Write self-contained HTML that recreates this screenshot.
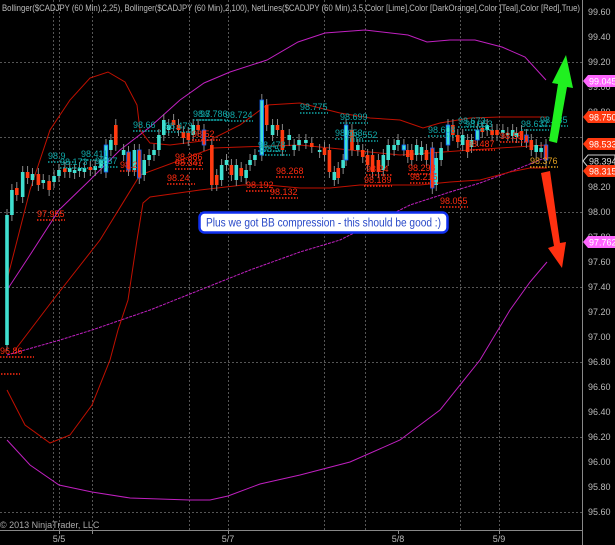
<!DOCTYPE html>
<html><head><meta charset="utf-8"><style>
html,body{margin:0;padding:0;background:#000;width:615px;height:545px;overflow:hidden}
svg{display:block}
text{font-family:"Liberation Sans",sans-serif}
</style></head><body>
<svg id="s" width="615" height="545" viewBox="0 0 615 545" xmlns="http://www.w3.org/2000/svg">
<rect width="615" height="545" fill="#000"/>
<g stroke="#555" stroke-width="1" stroke-dasharray="2,2" fill="none">
<line x1="0" y1="62.5" x2="582" y2="62.5"/><line x1="0" y1="137.5" x2="582" y2="137.5"/>
<line x1="0" y1="212.5" x2="582" y2="212.5"/><line x1="0" y1="287.5" x2="582" y2="287.5"/>
<line x1="0" y1="362.5" x2="582" y2="362.5"/><line x1="0" y1="437.5" x2="582" y2="437.5"/>
<line x1="0" y1="512.5" x2="582" y2="512.5"/>
<line x1="53.5" y1="0" x2="53.5" y2="530"/><line x1="59.5" y1="0" x2="59.5" y2="530"/>
<line x1="92.5" y1="0" x2="92.5" y2="530"/><line x1="189.5" y1="0" x2="189.5" y2="530"/>
<line x1="228.5" y1="0" x2="228.5" y2="530"/><line x1="324.5" y1="0" x2="324.5" y2="530"/>
<line x1="365.5" y1="0" x2="365.5" y2="530"/><line x1="460.5" y1="0" x2="460.5" y2="530"/>
<line x1="499.5" y1="0" x2="499.5" y2="530"/>
</g>
<line x1="582.5" y1="0" x2="582.5" y2="545" stroke="#888"/>
<line x1="0" y1="530.5" x2="582" y2="530.5" stroke="#888"/>
<g stroke="#888"><line x1="59.5" y1="530" x2="59.5" y2="534"/><line x1="92.5" y1="530" x2="92.5" y2="534"/><line x1="228.5" y1="530" x2="228.5" y2="534"/><line x1="398.5" y1="530" x2="398.5" y2="534"/><line x1="499.5" y1="530" x2="499.5" y2="534"/></g>

<g fill="none" stroke-width="1">
<polyline stroke="#c020c0" points="180,100 204,83 230,72 267,60 298,42 325,33 365,30 408,35 427,42 450,40 475,40 502,47 525,57 546,80"/>
<polyline stroke="#c020c0" points="7,290 30,255 59,210 90,180 120,150 150,127 180,100"/>
<polyline stroke="#c020c0" stroke-dasharray="3,1" points="7,355 60,340 92,330 150,310 200,290 250,270 300,252 340,240 410,205 450,192 480,183 520,168 547,157"/>
<polyline stroke="#c020c0" points="7,440 30,465 59,485 92,492 130,498 189,500 210,500 228,496 260,484 300,475 350,462 400,440 440,410 480,360 510,310 530,282 547,262"/>
<polyline stroke="#c01000" points="7,280 30,190 50,130 70,100 90,78 108,72 125,82 137,105 140,130 150,143 170,145 210,140 240,125 267,105 300,103 340,113 370,118 400,120 423,128 440,123 470,118 500,117 547,117"/>
<polyline stroke="#c01000" points="15,350 53,300 100,240 140,175 213,148 300,145 350,150 400,155 430,153 470,150 500,148 547,145"/>
<polyline stroke="#c01000" points="7,390 25,425 50,443 70,435 92,405 110,360 118,330 128,300 137,240 143,203 150,197 200,190 243,185 267,185 300,188 330,188 360,185 420,185 450,182 480,180 510,172 530,168 547,168"/>
</g>
<g id="c"></g>
<g font-size="9" id="lab"></g>

<rect x="199.5" y="212.5" width="248" height="20" rx="5" fill="#fff" stroke="#1030f0" stroke-width="2.5"/>
<text x="206" y="226.5" font-size="11.5" fill="#2848c8" textLength="235" lengthAdjust="spacingAndGlyphs">Plus we got BB compression - this should be good :)</text>

<polygon points="549,141 558,84 552,83 566,55 573,88 567,87 557,143" fill="#20f020"/>
<polygon points="541,173 550,171 560,243 566,242 562,268 548,248 554,246" fill="#ff3010"/>

<text x="2" y="11" font-size="9" fill="#bbb" textLength="578" lengthAdjust="spacingAndGlyphs">Bollinger($CADJPY (60 Min),2,25), Bollinger($CADJPY (60 Min),2,100), NetLines($CADJPY (60 Min),3,5,Color [Lime],Color [DarkOrange],Color [Teal],Color [Red],True)</text>
<text x="0" y="528" font-size="9" fill="#aaa">© 2013 NinjaTrader, LLC</text>
<g font-size="9" fill="#bbb" text-anchor="middle"><text x="59" y="542">5/5</text><text x="228" y="542">5/7</text><text x="398" y="542">5/8</text><text x="499" y="542">5/9</text></g>
<g font-size="9" fill="#bbb" id="ax"></g>
<g font-size="9" id="tags"></g>
</svg>
<script>
var NS="http://www.w3.org/2000/svg";
function el(p,t,a,txt){var e=document.createElementNS(NS,t);for(var k in a)e.setAttribute(k,a[k]);if(txt)e.textContent=txt;p.appendChild(e);return e;}
var ax=document.getElementById('ax');
for(var i=0;i<=20;i++){var p=99.6-i*0.2,y=12+i*25;if(i==5)continue;el(ax,'text',{x:588,y:y+3},p.toFixed(2));}
var tg=document.getElementById('tags');
[[81,'99.045','#ff66ff','#fff'],[117,'98.750','#ff3a10','#fff'],[144,'98.533','#ff3a10','#fff'],[161,'98.394','#000','#ddd'],[171,'98.315','#ff3a10','#fff'],[242,'97.762','#ff66ff','#fff']].forEach(function(t){
el(tg,'polygon',{points:'583,'+t[0]+' 588,'+(t[0]-6)+' 615,'+(t[0]-6)+' 615,'+(t[0]+6)+' 588,'+(t[0]+6),fill:t[2],stroke:t[2]=='#000'?'#ccc':'none'});
el(tg,'text',{x:589,y:t[0]+3.5,fill:t[3]},t[1]);});
var C='#40e0d0',R='#ff3a10',B='#1060ff';
var d=[[7,215,345,C],[12,190,215,C],[17,188,195,R],[23,172,197,C],[28,172,178,R],[33,174,180,C],[39,174,185,R],[44,180,183,C],[50,181,190,R],[55,176,182,C],[60,170,176,C],[66,168,172,R],[71,168,172,C],[76,170,173,C],[81,168,171,C],[86,168,172,C],[92,167,170,R],[97,166,170,C],[103,160,168,C],[108,145,172,C,1],[113,140,150,C],[118,125,145,R],[126,150,155,C],[131,152,170,R,1],[137,150,170,C],[142,150,178,R,1],[147,160,175,C],[152,155,160,C],[157,150,155,C],[162,135,150,C],[167,120,135,C],[172,125,130,C],[177,120,125,R],[182,125,130,R],[187,132,138,R],[192,133,140,R],[197,125,135,C],[202,125,130,R],[208,130,145,R,1],[216,145,185,R],[221,175,185,R],[226,165,180,C],[231,160,165,C],[236,165,175,R],[241,165,180,C],[246,168,176,R],[251,170,178,C],[255,160,165,C],[260,155,160,C],[267,100,155,C,1],[272,105,125,R],[278,125,135,C],[283,125,130,R],[288,130,150,R],[295,135,140,C],[300,145,150,C],[305,140,145,C],[312,140,143,C],[318,143,147,R],[326,150,152,C],[331,148,155,R],[336,150,172,R],[341,172,180,C],[345,168,178,R],[350,160,168,C],[353,125,160,C,1],[359,130,150,R],[365,145,150,C],[370,150,157,R],[375,155,165,R],[380,155,172,R],[386,160,172,R],[391,155,170,C],[396,145,160,C],[402,145,150,C],[406,140,145,C],[412,145,150,C,1],[416,150,157,R],[420,150,160,R],[425,145,155,C],[430,147,155,C],[435,150,160,R],[441,148,188,R,1],[445,158,185,C],[450,148,160,C],[457,125,145,C,1],[462,125,135,R],[467,135,142,R],[472,135,145,C],[477,140,152,R],[481,140,147,C],[487,130,140,C,1],[492,128,132,R],[497,125,130,C],[502,130,135,R],[507,130,135,R],[513,130,133,C],[518,133,135,C],[523,130,136,C],[527,133,137,C],[532,131,140,R],[537,135,142,R,1],[542,140,150,R],[547,145,152,C],[552,148,152,C],[557,145,160,R,1]];
var g=document.getElementById('c');
d.forEach(function(c){var x=7+(c[0]-7)*(546-7)/(557-7);
el(g,'line',{x1:x,y1:c[1]-6,x2:x,y2:c[2]+6,stroke:'#888','stroke-width':1});
el(g,'rect',{x:x-1.8,y:c[1],width:3.6,height:Math.max(1.5,c[2]-c[1]),fill:c[3],stroke:c[4]?B:'none','stroke-width':0.8});});
var lb=document.getElementById('lab');
var TL='#10a8a8',RD='#ff2a10',OR='#e0a020';
[[0,354,'96.86',RD,34],[-2,371,'',RD,22],[37,217,'97.955',RD,28],[48,159,'98.9',TL,28],[60,165,'98.173',TL,28],[81,157,'98.411',TL,28],[95,164,'98.37',TL,24],[120,168,'98.2',RD,18],[165,129,'98.473',TL,28],[167,181,'98.24',RD,28],[175,160,'98.386',RD,28],[175,166,'98.341',RD,28],[133,128,'98.66',TL,28],[193,117,'98.7',TL,28],[192,137,'98.52',RD,28],[200,117,'98.786',TL,28],[225,118,'98.724',TL,28],[246,188,'98.192',RD,28],[258,148,'98.478',TL,28],[262,152,'98.5',TL,28],[270,195,'98.132',RD,28],[276,174,'98.268',RD,28],[300,110,'98.775',TL,28],[335,136,'98.653',TL,28],[340,120,'98.699',TL,28],[350,138,'98.552',TL,28],[366,172,'98.24',RD,26],[364,183,'98.189',RD,28],[408,171,'98.298',RD,28],[410,180,'98.215',RD,28],[440,204,'98.055',RD,28],[428,133,'98.608',TL,28],[458,124,'98.673',TL,28],[465,127,'98.653',TL,28],[467,147,'98.487',RD,28],[500,139,'98.55',RD,28],[521,127,'98.637',TL,28],[530,164,'98.376',OR,28],[540,123,'98.685',TL,28]].forEach(function(l){
if(l[2])el(lb,'text',{x:l[0],y:l[1],fill:l[3]},l[2]);
el(lb,'line',{x1:l[0],y1:l[1]+3,x2:l[0]+l[4],y2:l[1]+3,stroke:l[3],'stroke-width':1.5,'stroke-dasharray':'1.5,1.5'});});
</script>
</body></html>
